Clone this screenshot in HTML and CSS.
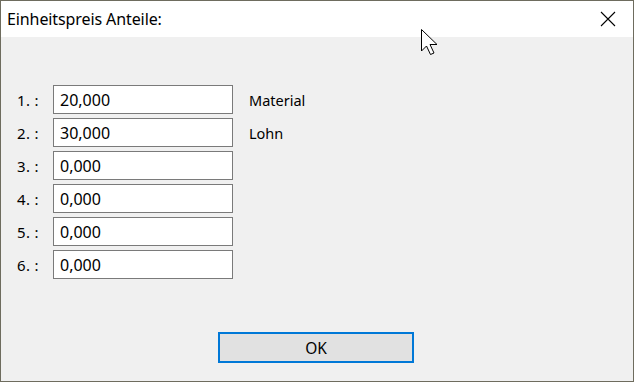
FILE: index.html
```html
<!DOCTYPE html>
<html lang="de">
<head>
  <meta charset="UTF-8" />
  <title>Einheitspreis Anteile</title>
  <link rel="stylesheet" href="styles.css">
</head>
<body>

<div class="fenster">
  <div class="titel">
    <span class="titel-text">Einheitspreis Anteile:</span>
    <svg class="schliessen" width="16" height="16" viewBox="0 0 16 16">
      <path d="M1 1 L15 15 M15 1 L1 15" stroke="#000" stroke-width="1.1" fill="none"/>
    </svg>
  </div>

  <div class="inhalt">
    <div class="zeilen">
      <div class="zeile"><span class="nr">1. :</span><input class="wert" value="20,000"><span class="name">Material</span></div>
      <div class="zeile"><span class="nr">2. :</span><input class="wert" value="30,000"><span class="name">Lohn</span></div>
      <div class="zeile"><span class="nr">3. :</span><input class="wert" value="0,000"><span class="name"></span></div>
      <div class="zeile"><span class="nr">4. :</span><input class="wert" value="0,000"><span class="name"></span></div>
      <div class="zeile"><span class="nr">5. :</span><input class="wert" value="0,000"><span class="name"></span></div>
      <div class="zeile"><span class="nr">6. :</span><input class="wert" value="0,000"><span class="name"></span></div>
    </div>

    <div class="knoepfe">
      <button class="ok">OK</button>
    </div>
  </div>

  <!-- Mauszeiger -->
  <svg class="zeiger" width="20" height="28" viewBox="0 0 20 28">
    <path d="M0.5 0.5 L0.5 22 L5.5 17 L9.5 25.5 L13 24 L9 15.5 L16 15.5 Z" fill="#fff" stroke="#000" stroke-width="1"/>
  </svg>
</div>

</body>
</html>
```

FILE: styles.css
```css
html, body {
  margin: 0;
  padding: 0;
}

body {
  font-family: 'Noto Sans', 'Segoe UI', sans-serif;
  color: #000;
}

.fenster {
  position: relative;
  width: 634px;
  height: 382px;
  box-sizing: border-box;
  border: 1px solid #6e6c5e;
  background: #f0f0f0;
  display: flex;
  flex-direction: column;
}

.titel {
  height: 36px;
  background: #fff;
  display: flex;
  align-items: center;
  justify-content: space-between;
  padding: 0 17px 0 6px;
}

.titel-text {
  font-size: 16px;
  letter-spacing: -0.1px;
}

.inhalt {
  flex: 1;
  display: flex;
  flex-direction: column;
  padding: 48px 0 0 16px;
}

.zeilen {
  display: flex;
  flex-direction: column;
  gap: 4px;
}

.zeile {
  display: flex;
  align-items: center;
  font-size: 14px;
}

.nr {
  width: 36px;
  font-size: 15px;
  letter-spacing: 0.3px;
}

.wert {
  width: 180px;
  height: 29px;
  box-sizing: border-box;
  border: 1px solid #7a7a7a;
  background: #fff;
  padding: 0 6px;
  font-family: inherit;
  font-size: 16px;
  margin: 0;
}

.name {
  margin-left: 16px;
  font-size: 14.5px;
}

.knoepfe {
  display: flex;
  justify-content: center;
  margin-top: 53px;
  padding-right: 16px;
}

.ok {
  width: 196px;
  height: 31px;
  border: 2px solid #0078d7;
  background: #e1e1e1;
  font-family: inherit;
  font-size: 15.5px;
  color: #000;
  position: relative;
  left: -1px;
}

.zeiger {
  position: absolute;
  left: 420px;
  top: 28px;
}
```
